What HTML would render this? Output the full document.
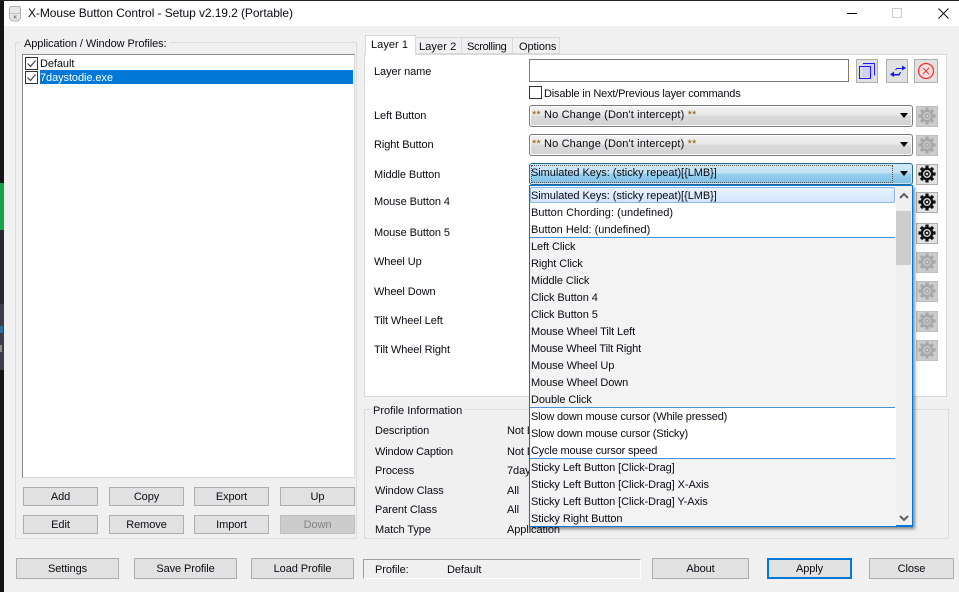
<!DOCTYPE html>
<html><head><meta charset="utf-8"><style>
html,body{margin:0;padding:0;width:959px;height:592px;overflow:hidden;background:#f0f0f0}
body{position:relative;font-family:"Liberation Sans",sans-serif;font-size:11px;color:#0a0a14;letter-spacing:-.08px}
div,svg{position:absolute;box-sizing:border-box}
.t{white-space:nowrap;height:14px;line-height:14px;margin-top:1px}
.b{background:#e1e1e1;border:1px solid #adadad;text-align:center;white-space:nowrap}
.s{height:19px;line-height:19px;width:75px}
.l{height:21px;line-height:21px}
.d{background:#ccc;border-color:#bdbdbd}
.g{border:1px solid #dcdcdc}
.w{background:#fff}
.c{left:529px;width:384px;height:22px;border:1px solid #7a7a7a;border-radius:3px;background:linear-gradient(#f2f2f2 0,#e9e9e9 45%,#dadada 50%,#d2d2d2 100%);box-shadow:inset 0 0 0 1px #fff;line-height:19px;padding-left:2px;white-space:nowrap;letter-spacing:.14px}
.r{left:530px;width:366px;height:17px;line-height:17px;padding-left:1px;white-space:nowrap;margin-top:1px}
</style></head><body>
<svg width="0" height="0" style="left:0;top:0"><defs>
<symbol id="gear" viewBox="0 0 20 20"><circle cx="10" cy="10" r="7" fill="#111"/><path d="M10 .5V19.500M.5 10H19.500M3.300 3.300L16.700 16.700M16.700 3.300L3.300 16.700" stroke="#111" stroke-width="3.600"/><circle cx="10" cy="10" r="4.400" fill="#e1e1e1"/><circle cx="10" cy="10" r="3" fill="#222"/><circle cx="10" cy="10" r="1.300" fill="#e1e1e1"/></symbol>
<symbol id="gearD" viewBox="0 0 20 20"><circle cx="10" cy="10" r="7" fill="#a8a8a8"/><path d="M10 .5V19.500M.5 10H19.500M3.300 3.300L16.700 16.700M16.700 3.300L3.300 16.700" stroke="#a8a8a8" stroke-width="3.600"/><circle cx="10" cy="10" r="4.400" fill="#ccc"/><circle cx="10" cy="10" r="3" fill="#a8a8a8"/><circle cx="10" cy="10" r="1.300" fill="#ccc"/></symbol>
</defs></svg>

<!-- desktop edge -->
<div style="left:0;top:0;width:4px;height:592px;background:#161416"></div>
<div style="left:0;top:183px;width:4px;height:47px;background:#1ba24a"></div>
<div style="left:0;top:230px;width:4px;height:74px;background:#25282e"></div>
<div style="left:0;top:304px;width:4px;height:66px;background:#3a3d46"></div>
<div style="left:0;top:326px;width:3px;height:7px;background:#2f6f9e"></div>
<div style="left:0;top:345px;width:2px;height:7px;background:#8a8a8a"></div>
<div style="left:0;top:0;width:959px;height:1px;background:#222"></div>

<!-- title bar -->
<div class="w" style="left:4px;top:1px;width:955px;height:25px"></div>
<svg style="left:8px;top:5px" width="14" height="17" viewBox="0 0 14 17"><path d="M2.500 1.500h9l1 1.500v10l-2.500 3H4l-2.500-3V3z" fill="#e8e8e8" stroke="#b0b0b0"/><path d="M2 8.500h10" stroke="#c4c4c4"/><path d="M5.500 10.500l3 3m0-3l-3 3" stroke="#8a8a8a"/></svg>
<div class="t" style="left:28px;top:6px;font-size:12px;margin-top:0">X-Mouse Button Control - Setup v2.19.2 (Portable)</div>
<div style="left:847px;top:13px;width:10px;height:1px;background:#000"></div>
<div style="left:892px;top:8px;width:10px;height:10px;border:1px solid #ccc"></div>
<svg style="left:938px;top:8px" width="11" height="11" viewBox="0 0 11 11"><path d="M.5.500l10 10m0-10l-10 10" stroke="#111" stroke-width="1"/></svg>

<!-- profiles group -->
<div class="g" style="left:15px;top:42px;width:342px;height:497px"></div>
<div class="t" style="left:21px;top:36px;padding:0 3px;background:#f0f0f0">Application / Window Profiles:</div>
<div class="w" style="left:22px;top:54px;width:333px;height:424px;border:1px solid #828790;border-right-color:#d8d8d8;border-bottom-color:#d8d8d8"></div>
<div style="left:40px;top:70px;width:313px;height:14px;background:#0078d7"></div>
<div style="left:25px;top:57px;width:13px;height:13px;border:1px solid #333;background:#fff"></div>
<svg style="left:25px;top:57px" width="13" height="13"><path d="M2.500 6.500l3 3 5-6" fill="none" stroke="#444" stroke-width="1.200"/></svg>
<div style="left:25px;top:71px;width:13px;height:13px;border:1px solid #333;background:#fff"></div>
<svg style="left:25px;top:71px" width="13" height="13"><path d="M2.500 6.500l3 3 5-6" fill="none" stroke="#444" stroke-width="1.200"/></svg>
<div class="t" style="left:40px;top:56px">Default</div>
<div class="t" style="left:40px;top:70px;color:#fff">7daystodie.exe</div>

<div class="b s" style="left:23px;top:487px">Add</div>
<div class="b s" style="left:109px;top:487px">Copy</div>
<div class="b s" style="left:194px;top:487px">Export</div>
<div class="b s" style="left:280px;top:487px">Up</div>
<div class="b s" style="left:23px;top:515px">Edit</div>
<div class="b s" style="left:109px;top:515px">Remove</div>
<div class="b s" style="left:194px;top:515px">Import</div>
<div class="b s d" style="left:280px;top:515px;color:#838383">Down</div>

<!-- bottom buttons -->
<div class="b l" style="left:16px;top:558px;width:103px">Settings</div>
<div class="b l" style="left:134px;top:558px;width:103px">Save Profile</div>
<div class="b l" style="left:251px;top:558px;width:103px">Load Profile</div>
<div style="left:363px;top:559px;width:278px;height:20px;border:1px solid;border-color:#a0a0a0 #fff #fff #a0a0a0"></div>
<div class="t" style="left:375px;top:562px">Profile:</div>
<div class="t" style="left:447px;top:562px">Default</div>
<div class="b l" style="left:652px;top:558px;width:97px">About</div>
<div class="b" style="left:767px;top:558px;width:85px;height:21px;line-height:19px;border:2px solid #0078d7">Apply</div>
<div class="b l" style="left:869px;top:558px;width:85px">Close</div>

<!-- tabs -->
<div class="w" style="left:364px;top:54px;width:583px;height:343px;border:1px solid #d9d9d9"></div>
<div class="w" style="left:365px;top:35px;width:51px;height:20px;border:1px solid #d9d9d9;border-bottom:0;line-height:19px;padding-left:5px;letter-spacing:.05px">Layer 1</div>
<div style="left:416px;top:37px;width:46px;height:17px;background:#f0f0f0;border:1px solid #d9d9d9;border-left:0;line-height:18px;padding-left:3px;letter-spacing:.1px">Layer 2</div>
<div style="left:462px;top:37px;width:51px;height:17px;background:#f0f0f0;border:1px solid #d9d9d9;border-left:0;line-height:18px;padding-left:5px;letter-spacing:-.3px">Scrolling</div>
<div style="left:513px;top:37px;width:47px;height:17px;background:#f0f0f0;border:1px solid #d9d9d9;border-left:0;line-height:18px;padding-left:6px">Options</div>

<div class="t" style="left:374px;top:64px">Layer name</div>
<div class="t" style="left:374px;top:108px">Left Button</div>
<div class="t" style="left:374px;top:137px">Right Button</div>
<div class="t" style="left:374px;top:167px">Middle Button</div>
<div class="t" style="left:374px;top:194px">Mouse Button 4</div>
<div class="t" style="left:374px;top:225px">Mouse Button 5</div>
<div class="t" style="left:374px;top:254px">Wheel Up</div>
<div class="t" style="left:374px;top:284px">Wheel Down</div>
<div class="t" style="left:374px;top:313px">Tilt Wheel Left</div>
<div class="t" style="left:374px;top:342px">Tilt Wheel Right</div>

<div class="w" style="left:529px;top:59px;width:320px;height:23px;border:1px solid #7a7a7a"></div>
<div class="b" style="left:856px;top:59px;width:22px;height:24px"></div>
<svg style="left:856px;top:59px" width="22" height="24"><rect x="6" y="5" width="11" height="13" fill="#cfcff8"/><path d="M7 4.500h11.500v12" fill="none" stroke="#1a1aff"/><rect x="3.500" y="7.500" width="11" height="12" fill="none" stroke="#1a1aff"/></svg>
<div class="b" style="left:886px;top:59px;width:22px;height:24px"></div>
<svg style="left:886px;top:59px" width="22" height="24"><path d="M9 11l1.500-2H16V6.500L20 9l-4 2.500V10h-5l-1 1z" fill="#1414ff"/><path d="M14 13l-1.500 2H8v-2.500L4 15.500 8 18v-1.500h5.500L15 13z" fill="#1414ff"/></svg>
<div class="b" style="left:914px;top:59px;width:24px;height:24px"></div>
<svg style="left:914px;top:59px" width="24" height="24"><circle cx="12" cy="12" r="7.500" fill="#f4dede" stroke="#ff2a2a" stroke-width="1.200"/><path d="M9 9l6 6m0-6l-6 6" stroke="#f04040"/></svg>

<div class="w" style="left:529px;top:86px;width:13px;height:13px;border:1px solid #333"></div>
<div class="t" style="left:544px;top:86px;letter-spacing:-.18px">Disable in Next/Previous layer commands</div>

<div class="c" style="top:105px"><span style="color:#8a5a00">**</span> No Change (Don't intercept) <span style="color:#8a5a00">**</span></div>
<div class="c" style="top:134px"><span style="color:#8a5a00">**</span> No Change (Don't intercept) <span style="color:#8a5a00">**</span></div>
<div class="c" style="top:163px;padding-left:1px;letter-spacing:-.05px;border-color:#2a6a92;background:linear-gradient(#d6ecf9 0,#bfe0f4 45%,#97cfee 50%,#7fc1e6 100%);box-shadow:inset 0 0 0 1px #c8e6f8">Simulated Keys: (sticky repeat)[{LMB}]</div>
<div style="left:531px;top:165px;width:362px;height:18px;border:1px dotted #555"></div>
<svg style="left:900px;top:113px" width="9" height="6"><path d="M0 0h8L4 5z" fill="#000"/></svg>
<svg style="left:900px;top:142px" width="9" height="6"><path d="M0 0h8L4 5z" fill="#000"/></svg>
<svg style="left:900px;top:171px" width="9" height="6"><path d="M0 0h8L4 5z" fill="#000"/></svg>

<!-- gears -->
<div class="b d" style="left:916px;top:106px;width:22px;height:21px"></div>
<svg style="left:918px;top:107px" width="18" height="18"><use href="#gearD"/></svg>
<div class="b d" style="left:916px;top:135px;width:22px;height:21px"></div>
<svg style="left:918px;top:136px" width="18" height="18"><use href="#gearD"/></svg>
<div class="b" style="left:916px;top:164px;width:22px;height:21px"></div>
<svg style="left:918px;top:165px" width="18" height="18"><use href="#gear"/></svg>
<div class="b" style="left:916px;top:192px;width:22px;height:21px"></div>
<svg style="left:918px;top:193px" width="18" height="18"><use href="#gear"/></svg>
<div class="b" style="left:916px;top:223px;width:22px;height:21px"></div>
<svg style="left:918px;top:224px" width="18" height="18"><use href="#gear"/></svg>
<div class="b d" style="left:916px;top:252px;width:22px;height:21px"></div>
<svg style="left:918px;top:253px" width="18" height="18"><use href="#gearD"/></svg>
<div class="b d" style="left:916px;top:281px;width:22px;height:21px"></div>
<svg style="left:918px;top:282px" width="18" height="18"><use href="#gearD"/></svg>
<div class="b d" style="left:916px;top:311px;width:22px;height:21px"></div>
<svg style="left:918px;top:312px" width="18" height="18"><use href="#gearD"/></svg>
<div class="b d" style="left:916px;top:340px;width:22px;height:21px"></div>
<svg style="left:918px;top:341px" width="18" height="18"><use href="#gearD"/></svg>

<!-- profile information -->
<div class="g" style="left:364px;top:409px;width:585px;height:130px"></div>
<div class="t" style="left:370px;top:403px;padding:0 3px;background:#f0f0f0;letter-spacing:0">Profile Information</div>
<div class="t" style="left:375px;top:423px">Description</div>
<div class="t" style="left:375px;top:444px;letter-spacing:-.15px">Window Caption</div>
<div class="t" style="left:375px;top:463px">Process</div>
<div class="t" style="left:375px;top:483px">Window Class</div>
<div class="t" style="left:375px;top:502px">Parent Class</div>
<div class="t" style="left:375px;top:522px">Match Type</div>
<div class="t" style="left:507px;top:423px">Not Defined</div>
<div class="t" style="left:507px;top:444px">Not Defined</div>
<div class="t" style="left:507px;top:463px">7daystodie.exe</div>
<div class="t" style="left:507px;top:483px">All</div>
<div class="t" style="left:507px;top:502px">All</div>
<div class="t" style="left:507px;top:522px">Application</div>

<!-- dropdown -->
<div style="left:529px;top:185px;width:384px;height:342px;background:#fff;border:1px solid #0078d7;border-bottom-width:2px;box-shadow:2px 2px 3px rgba(0,0,0,.45)"></div>
<div style="left:530px;top:238px;width:366px;height:170px;background:#f3f3f3"></div>
<div style="left:530px;top:459px;width:366px;height:67px;background:#f3f3f3"></div>
<div style="left:530px;top:187px;width:365px;height:16px;background:linear-gradient(#e9f3fd,#d3e5fa);border:1px solid #8ab8ea;border-radius:2px"></div>
<div style="left:530px;top:237px;width:365px;height:1px;background:#4a90d9"></div>
<div style="left:530px;top:407px;width:365px;height:1px;background:#4a90d9"></div>
<div style="left:530px;top:458px;width:365px;height:1px;background:#4a90d9"></div>
<div class="r" style="top:187px;letter-spacing:-.05px">Simulated Keys: (sticky repeat)[{LMB}]</div>
<div class="r" style="top:204px;letter-spacing:.03px">Button Chording: (undefined)</div>
<div class="r" style="top:221px;letter-spacing:0">Button Held: (undefined)</div>
<div class="r" style="top:238px">Left Click</div>
<div class="r" style="top:255px">Right Click</div>
<div class="r" style="top:272px">Middle Click</div>
<div class="r" style="top:289px">Click Button 4</div>
<div class="r" style="top:306px">Click Button 5</div>
<div class="r" style="top:323px">Mouse Wheel Tilt Left</div>
<div class="r" style="top:340px;letter-spacing:-.14px">Mouse Wheel Tilt Right</div>
<div class="r" style="top:357px">Mouse Wheel Up</div>
<div class="r" style="top:374px">Mouse Wheel Down</div>
<div class="r" style="top:391px">Double Click</div>
<div class="r" style="top:408px;letter-spacing:-.18px">Slow down mouse cursor (While pressed)</div>
<div class="r" style="top:425px;letter-spacing:-.18px">Slow down mouse cursor (Sticky)</div>
<div class="r" style="top:442px;letter-spacing:-.17px">Cycle mouse cursor speed</div>
<div class="r" style="top:459px">Sticky Left Button [Click-Drag]</div>
<div class="r" style="top:476px">Sticky Left Button [Click-Drag] X-Axis</div>
<div class="r" style="top:493px">Sticky Left Button [Click-Drag] Y-Axis</div>
<div class="r" style="top:510px">Sticky Right Button</div>
<div style="left:896px;top:186px;width:16px;height:339px;background:#f0f0f0"></div>
<div style="left:896px;top:211px;width:15px;height:54px;background:#cdcdcd"></div>
<svg style="left:899px;top:192px" width="10" height="7"><path d="M1 6l4-4 4 4" fill="none" stroke="#606060" stroke-width="2"/></svg>
<svg style="left:899px;top:515px" width="10" height="7"><path d="M1 1l4 4 4-4" fill="none" stroke="#606060" stroke-width="2"/></svg>
</body></html>
